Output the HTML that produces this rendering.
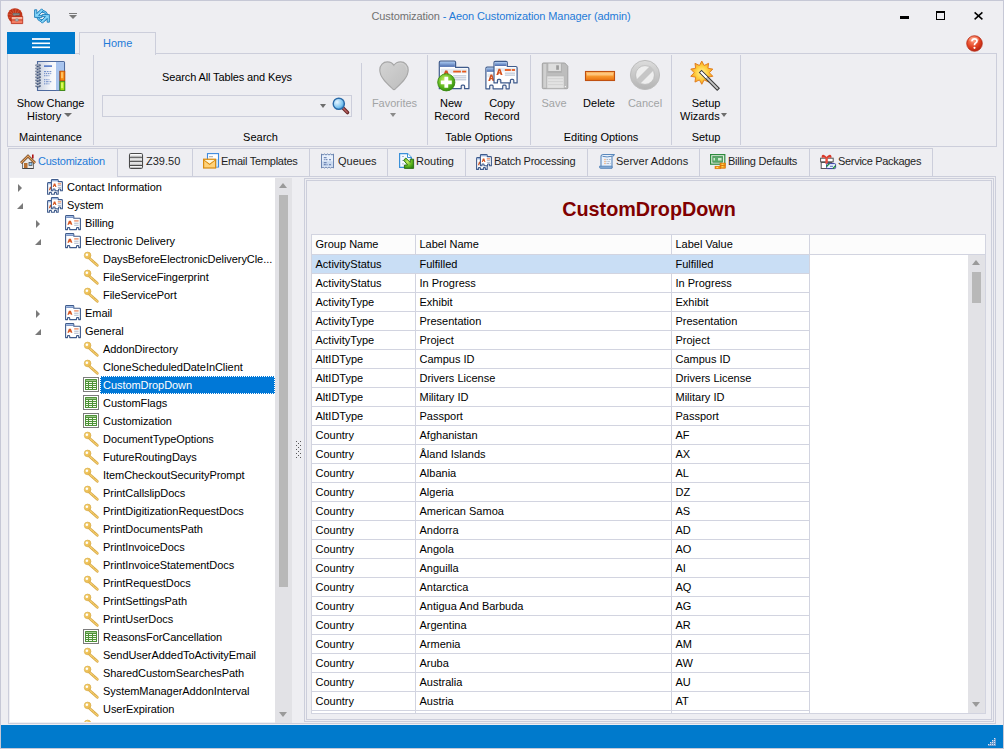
<!DOCTYPE html>
<html><head><meta charset="utf-8">
<style>
*{margin:0;padding:0;box-sizing:border-box}
html,body{width:1004px;height:749px;overflow:hidden}
body{background:#EEEEF2;font-family:"Liberation Sans",sans-serif;font-size:11px;color:#000;position:relative}
.a{position:absolute}
.t{position:absolute;white-space:nowrap;line-height:13px}
.bd{border:1px solid #CCCEDB}
.vl{position:absolute;width:1px;background:#CCCEDB}
.hl{position:absolute;height:1px;background:#CCCEDB}
.c{text-align:center}
svg{position:absolute;overflow:visible}
.tc{width:0;height:0;border-top:4px solid transparent;border-bottom:4px solid transparent;border-left:4px solid #7A7A7A}
.te{width:0;height:0;border-left:6px solid transparent;border-bottom:6px solid #7A7A7A}
.tsel{background:#0078D7;outline:1px dotted #fff;outline-offset:-1px}
.gl{background:#D2D4E0}
.ts{letter-spacing:-0.3px}
.tt{letter-spacing:-0.06px}
</style></head><body>
<!-- window border -->
<div class="a" style="left:0;top:0;width:1004px;height:749px;border:1px solid #C6C8D6"></div>

<!-- TITLE BAR -->
<div class="t" style="left:-1px;width:1004px;top:10px;letter-spacing:-0.1px;text-align:center;color:#717171;padding-left:0px">Customization<span style="color:#1E7BD8"> - Aeon Customization Manager (admin)</span></div>
<div id="winctl">
  <div class="a" style="left:900px;top:16px;width:9px;height:3px;background:#000"></div>
  <div class="a" style="left:936px;top:11px;width:9px;height:9px;border:1px solid #000;border-top-width:2px"></div>
  <svg style="left:974px;top:12px" width="9" height="8" viewBox="0 0 9 8"><path d="M0.6 0.4 L8.4 7.4 M8.4 0.4 L0.6 7.4" stroke="#000" stroke-width="1.5"/></svg>
</div>

<!-- RIBBON TABS -->
<div class="a" style="left:7px;top:32px;width:68px;height:22px;background:#007ACC;z-index:3"></div>
<svg style="left:32px;top:36px;z-index:4" width="18" height="14" viewBox="0 0 18 14"><rect x="0" y="2" width="18" height="2" fill="#E4EEF8"/><rect x="0" y="6.5" width="18" height="1.6" fill="#fff"/><rect x="0" y="10.5" width="18" height="1.6" fill="#fff"/></svg>
<div class="a" style="left:79px;top:32px;width:77px;height:23px;border:1px solid #CCCEDB;border-bottom:none;background:#EEEEF2;z-index:2"></div>
<div class="t" style="left:103px;top:37px;color:#1E7BD8;z-index:3">Home</div>

<!-- RIBBON PANEL -->
<div class="a" style="left:7px;top:53px;width:990px;height:94px;border:1px solid #CCCEDB"></div>
<div class="vl" style="left:93px;top:55px;height:90px"></div>
<div class="vl" style="left:361px;top:63px;height:57px"></div>
<div class="vl" style="left:427px;top:55px;height:90px"></div>
<div class="vl" style="left:530px;top:55px;height:90px"></div>
<div class="vl" style="left:671px;top:55px;height:90px"></div>
<div class="vl" style="left:740px;top:55px;height:90px"></div>

<!-- ribbon text -->
<div class="t c" style="left:8px;width:85px;top:97px;letter-spacing:-0.15px">Show Change</div>
<div class="t" style="left:27px;top:110px">History</div>
<div class="a" style="left:64px;top:113px;width:0;height:0;border-left:4px solid transparent;border-right:4px solid transparent;border-top:4px solid #6D6D6D"></div>
<div class="t c" style="left:8px;width:85px;top:131px">Maintenance</div>

<div class="t c" style="left:94px;width:266px;top:71px;letter-spacing:-0.12px">Search All Tables and Keys</div>
<div class="a" style="left:102px;top:95px;width:250px;height:22px;border:1px solid #CCCEDB;background:#EEEEF2"></div>
<div class="t c" style="left:94px;width:333px;top:131px">Search</div>

<div class="t c" style="left:362px;width:65px;top:97px;color:#A2A4A5">Favorites</div>
<div class="t c" style="left:428px;width:102px;top:131px">Table Options</div>
<div class="t c" style="left:428px;width:46px;top:97px">New</div>
<div class="t c" style="left:429px;width:46px;top:110px">Record</div>
<div class="t c" style="left:477px;width:50px;top:97px">Copy</div>
<div class="t c" style="left:477px;width:50px;top:110px">Record</div>

<div class="t c" style="left:531px;width:140px;top:131px">Editing Options</div>
<div class="t c" style="left:535px;width:38px;top:97px;color:#A2A4A5">Save</div>
<div class="t c" style="left:575px;width:48px;top:97px">Delete</div>
<div class="t c" style="left:624px;width:42px;top:97px;color:#A2A4A5">Cancel</div>

<div class="t c" style="left:672px;width:68px;top:131px">Setup</div>
<div class="t c" style="left:672px;width:68px;top:97px">Setup</div>
<div class="t" style="left:680px;top:110px">Wizards</div>

<!-- RIBBON ICONS -->
<svg style="left:34px;top:60px" width="32" height="32" viewBox="0 0 32 32">
 <defs><linearGradient id="gPage" x1="0" y1="0" x2="1" y2="0"><stop offset="0" stop-color="#C8D0E0"/><stop offset="0.5" stop-color="#F4F6FA"/><stop offset="1" stop-color="#fff"/></linearGradient></defs>
 <path d="M3.5,1.5 H29.5 Q30.5,1.5 30.5,2.5 V30.5 H3.5 Z" fill="url(#gPage)" stroke="#4E6A9E" stroke-width="1.1"/>
 <rect x="22" y="2.1" width="8" height="9" fill="#A8C4EE"/>
 <rect x="22" y="2.1" width="3.2" height="28" fill="#A8C4EE"/>
 <path d="M25.5,11 V30.3" stroke="#4E6A9E" stroke-width="0.9"/>
 <rect x="26" y="11.2" width="4.8" height="9.4" fill="#F88A10" stroke="#C85000" stroke-width="0.9"/>
 <rect x="27" y="12.2" width="2.2" height="6" fill="#FFC060"/>
 <rect x="26" y="21.6" width="4.8" height="8.8" fill="#A8E010" stroke="#3A8A10" stroke-width="0.9"/>
 <rect x="27" y="22.6" width="2.2" height="5.5" fill="#D8F860"/>
 <ellipse cx="4" cy="5.30" rx="2.9" ry="1.35" fill="#34466A"/>
 <path d="M1.8,5.00 H5.2" stroke="#fff" stroke-width="0.9" stroke-linecap="round"/>
 <ellipse cx="4" cy="8.27" rx="2.9" ry="1.35" fill="#34466A"/>
 <path d="M1.8,7.97 H5.2" stroke="#fff" stroke-width="0.9" stroke-linecap="round"/>
 <ellipse cx="4" cy="11.24" rx="2.9" ry="1.35" fill="#34466A"/>
 <path d="M1.8,10.94 H5.2" stroke="#fff" stroke-width="0.9" stroke-linecap="round"/>
 <ellipse cx="4" cy="14.21" rx="2.9" ry="1.35" fill="#34466A"/>
 <path d="M1.8,13.91 H5.2" stroke="#fff" stroke-width="0.9" stroke-linecap="round"/>
 <ellipse cx="4" cy="17.18" rx="2.9" ry="1.35" fill="#34466A"/>
 <path d="M1.8,16.88 H5.2" stroke="#fff" stroke-width="0.9" stroke-linecap="round"/>
 <ellipse cx="4" cy="20.15" rx="2.9" ry="1.35" fill="#34466A"/>
 <path d="M1.8,19.85 H5.2" stroke="#fff" stroke-width="0.9" stroke-linecap="round"/>
 <ellipse cx="4" cy="23.12" rx="2.9" ry="1.35" fill="#34466A"/>
 <path d="M1.8,22.82 H5.2" stroke="#fff" stroke-width="0.9" stroke-linecap="round"/>
 <ellipse cx="4" cy="26.09" rx="2.9" ry="1.35" fill="#34466A"/>
 <path d="M1.8,25.79 H5.2" stroke="#fff" stroke-width="0.9" stroke-linecap="round"/>
 <rect x="10" y="5.4" width="8" height="1.4" fill="#3E68C0"/>
 <g fill="#5A7CC0">
  <rect x="10" y="11.2" width="2.2" height="0.9"/><rect x="13" y="11.2" width="1.6" height="0.9"/><rect x="15.5" y="11.2" width="1.8" height="0.9"/>
  <rect x="10" y="13.2" width="0.9" height="0.9"/><rect x="11.8" y="13.2" width="1.4" height="0.9"/><rect x="14" y="13.2" width="1.4" height="0.9"/><rect x="16.3" y="13.2" width="0.9" height="0.9"/>
  <rect x="10" y="15.3" width="1.4" height="0.9"/><rect x="12.2" y="15.3" width="1.4" height="0.9"/><rect x="14.5" y="15.3" width="0.9" height="0.9"/>
  <rect x="10" y="19.3" width="1.4" height="0.9"/><rect x="12.2" y="19.3" width="1.4" height="0.9"/><rect x="14.5" y="19.3" width="0.9" height="0.9"/>
  <rect x="10" y="21.3" width="0.9" height="0.9"/><rect x="11.8" y="21.3" width="2.8" height="0.9"/><rect x="15.5" y="21.3" width="1.8" height="0.9"/>
  <rect x="10" y="23.4" width="1.4" height="0.9"/><rect x="12.2" y="23.4" width="1.4" height="0.9"/><rect x="14.5" y="23.4" width="0.9" height="0.9"/>
 </g>
</svg>
<!-- search dropdown + magnifier -->
<div class="a" style="left:320px;top:104px;width:0;height:0;border-left:3.5px solid transparent;border-right:3.5px solid transparent;border-top:4px solid #6D6D6D"></div>
<svg style="left:332px;top:97px" width="18" height="18" viewBox="0 0 18 18">
 <defs><radialGradient id="gLens" cx="0.35" cy="0.35" r="0.7"><stop offset="0" stop-color="#E8F6FF"/><stop offset="0.7" stop-color="#7CC4F0"/><stop offset="1" stop-color="#3A90D0"/></radialGradient></defs>
 <path d="M10,10 L15.5,15.5" stroke="#6A2A2A" stroke-width="3.6" stroke-linecap="round"/>
 <path d="M10.5,10.5 L15.2,15.2" stroke="#B86060" stroke-width="1.5" stroke-linecap="round"/>
 <circle cx="6.8" cy="6.8" r="5.6" fill="url(#gLens)" stroke="#2A6AA8" stroke-width="1.4"/>
</svg>
<!-- favorites heart -->
<svg style="left:378px;top:60px" width="32" height="32" viewBox="0 0 32 32">
 <path d="M16,29.6 Q15.4,29.6 14.6,28.8 C9,23.6 1.8,17.4 1.8,10 C1.8,5 5.2,1.9 9.4,1.9 C12.6,1.9 14.9,3.6 16,5.6 C17.1,3.6 19.4,1.9 22.6,1.9 C26.8,1.9 30.2,5 30.2,10 C30.2,17.4 23,23.6 17.4,28.8 Q16.6,29.6 16,29.6 Z" fill="url(#gHeart)" stroke="#A6A6A6" stroke-width="1.1"/>
 <path d="M16,6.5 C17,4.6 19,3.2 22,3.2 C25,3.2 28.6,5.4 28.8,10" fill="none" stroke="#D8D8D8" stroke-width="0.8" opacity="0.7"/>
</svg>
<div class="a" style="left:390px;top:113px;width:0;height:0;border-left:3.5px solid transparent;border-right:3.5px solid transparent;border-top:4px solid #8A8A8A"></div>
<!-- new record -->
<svg style="left:438px;top:60px" width="32" height="32" viewBox="0 0 32 32">
<path d="M1.3,28.700000000000003 V2.4000000000000004 Q1.3,1.1 2.6,1.1 H16.3 Q17.6,1.1 17.6,2.4000000000000004 V7.4 H29.6 Q30.900000000000002,7.4 30.900000000000002,8.700000000000001 V28.700000000000003 H26.599999999999998 V26.1 Q26.599999999999998,25.1 25.599999999999998,25.1 H24.2 Q23.2,25.1 23.2,26.1 V28.700000000000003 H9.7 V26.1 Q9.7,25.1 8.7,25.1 H7.3 Q6.3,25.1 6.3,26.1 V28.700000000000003 Z" fill="#fff" stroke="#3F5B8C" stroke-width="1.2" stroke-linejoin="round"/>
<rect x="2.0" y="1.8" width="14.9" height="5.1" fill="url(#gTab)"/>
<rect x="2.8" y="8.700000000000001" width="26.6" height="4.686" fill="#E6EAF0"/>
<path d="M4.260000000000001,18.476000000000003 L7.137120000000001,10.382000000000001 H9.374880000000001 L12.252000000000002,18.476000000000003 H9.854400000000002 L9.055200000000001,16.4525 H7.456800000000001 L6.6576,18.476000000000003 Z" fill="#D2501E"/>
<path d="M7.61664,14.833700000000002 H8.89536 L8.256,12.810200000000002 Z" fill="#fff"/>
<rect x="15.212" y="10.682000000000002" width="7.696000000000001" height="1.8" fill="#E85A1C"/>
<rect x="24.092" y="10.682000000000002" width="4.144000000000001" height="1.8" fill="#E85A1C"/>
<rect x="15.212" y="15.400280000000002" width="13.024000000000001" height="0.9" fill="#A8B4C8"/>
<rect x="15.212" y="17.400280000000002" width="13.024000000000001" height="0.9" fill="#A8B4C8"/>
<rect x="15.212" y="19.400280000000002" width="13.024000000000001" height="0.9" fill="#A8B4C8"/>
 <circle cx="8.3" cy="22.3" r="8.6" fill="url(#gGreen)" stroke="#3A8A10" stroke-width="0.9"/>
 <path d="M8.3,16.8 V27.8 M2.8,22.3 H13.8" stroke="#fff" stroke-width="3.8"/>
</svg>
<!-- copy record -->
<svg style="left:485px;top:60px" width="32" height="32" viewBox="0 0 32 32">
<path d="M0.9,28.8 V8.4 Q0.9,7.1 2.2,7.1 H8.6 Q9.9,7.1 9.9,8.4 V12.3 H22.9 Q24.2,12.3 24.2,13.600000000000001 V28.8 H21.099999999999998 V26.2 Q21.099999999999998,25.2 20.099999999999998,25.2 H18.7 Q17.7,25.2 17.7,26.2 V28.8 H8.1 V26.2 Q8.1,25.2 7.1,25.2 H5.7 Q4.7,25.2 4.7,26.2 V28.8 Z" fill="#fff" stroke="#3F5B8C" stroke-width="1.2" stroke-linejoin="round"/>
<rect x="1.6" y="7.8" width="7.6" height="4.0" fill="url(#gTab)"/>
<rect x="2.4" y="13.600000000000001" width="20.3" height="3.63" fill="#E6EAF0"/>
<path d="M3.23,20.880000000000003 L5.494759999999999,14.610000000000001 H7.25624 L9.521,20.880000000000003 H7.633699999999999 L7.0046,19.3125 H5.7464 L5.1173,20.880000000000003 Z" fill="#D2501E"/>
<path d="M5.87222,18.058500000000002 H6.87878 L6.375500000000001,16.491 Z" fill="#fff"/>
<rect x="11.851" y="14.910000000000002" width="6.058000000000001" height="1.8" fill="#E85A1C"/>
<rect x="18.841" y="14.910000000000002" width="3.2620000000000005" height="1.8" fill="#E85A1C"/>
<rect x="11.851" y="18.497400000000003" width="10.252" height="0.9" fill="#A8B4C8"/>
<rect x="11.851" y="20.497400000000003" width="10.252" height="0.9" fill="#A8B4C8"/>
<path d="M9,22.9 V2.7 Q9,1.4 10.3,1.4 H21.0 Q22.3,1.4 22.3,2.7 V6.5 H30.8 Q32.1,6.5 32.1,7.8 V22.9 H28.799999999999997 V20.299999999999997 Q28.799999999999997,19.299999999999997 27.799999999999997,19.299999999999997 H26.4 Q25.4,19.299999999999997 25.4,20.299999999999997 V22.9 H15.8 V20.299999999999997 Q15.8,19.299999999999997 14.8,19.299999999999997 H13.4 Q12.4,19.299999999999997 12.4,20.299999999999997 V22.9 Z" fill="#fff" stroke="#3F5B8C" stroke-width="1.2" stroke-linejoin="round"/>
<rect x="9.7" y="2.0999999999999996" width="11.9" height="3.8999999999999995" fill="url(#gTab)"/>
<rect x="10.5" y="7.8" width="20.1" height="3.6079999999999997" fill="#E6EAF0"/>
<path d="M11.31,15.027999999999999 L13.555320000000002,8.796 H15.301680000000001 L17.547,15.027999999999999 H15.675900000000002 L15.052200000000001,13.469999999999999 H13.8048 L13.1811,15.027999999999999 Z" fill="#D2501E"/>
<path d="M13.929540000000001,12.2236 H14.92746 L14.428500000000001,10.6656 Z" fill="#fff"/>
<rect x="19.857" y="9.096" width="6.006" height="1.8" fill="#E85A1C"/>
<rect x="26.787" y="9.096" width="3.2340000000000004" height="1.8" fill="#E85A1C"/>
<rect x="19.857" y="12.659839999999999" width="10.164000000000001" height="0.9" fill="#A8B4C8"/>
<rect x="19.857" y="14.659839999999999" width="10.164000000000001" height="0.9" fill="#A8B4C8"/>
</svg>
<!-- save -->
<svg style="left:541px;top:60px" width="32" height="32" viewBox="0 0 32 32">
 <path d="M2.3,3 H23.8 L26.8,6.2 V27.7 Q26.8,28.7 25.8,28.7 H2.3 Q1.3,28.7 1.3,27.7 V4 Q1.3,3 2.3,3 Z" fill="#BDBDBD" stroke="#A2A2A2" stroke-width="1"/>
 <rect x="2.4" y="4" width="2.6" height="23.6" fill="#D0D0D0"/>
 <rect x="6.3" y="3.4" width="14.6" height="9.4" fill="#B0B0B0"/>
 <rect x="7.3" y="3.6" width="12.6" height="7.4" fill="#DEDEDE"/>
 <rect x="15.2" y="5.3" width="2.7" height="4.5" fill="#9C9C9C"/>
 <rect x="5.9" y="16" width="17.2" height="12.2" fill="#E2E2E2" stroke="#B4B4B4" stroke-width="0.6"/>
 <g fill="#CACACA"><rect x="7" y="18.4" width="15" height="0.7"/><rect x="7" y="21.4" width="15" height="0.7"/><rect x="7" y="24.4" width="15" height="0.7"/></g>
 <rect x="23.8" y="26" width="1.2" height="1.2" fill="#F4F4F4"/>
</svg>
<!-- delete -->
<svg style="left:584px;top:60px" width="32" height="32" viewBox="0 0 32 32">
 <rect x="1.5" y="11.5" width="29" height="9" fill="url(#gOr)" stroke="#C05010" stroke-width="1.1"/>
 <rect x="3" y="13" width="26" height="2.5" fill="#FFD090" opacity="0.7"/>
</svg>
<!-- cancel -->
<svg style="left:629px;top:59px" width="32" height="32" viewBox="0 0 32 32">
 <defs><linearGradient id="gCan" x1="0" y1="0" x2="0" y2="1"><stop offset="0" stop-color="#DCDCDC"/><stop offset="1" stop-color="#B4B4B4"/></linearGradient></defs>
 <circle cx="16" cy="16" r="14.6" fill="url(#gCan)" stroke="#BDBDBD" stroke-width="1"/>
 <circle cx="16" cy="16" r="9.4" fill="#EEEEEE" stroke="#B4B4B4" stroke-width="0.7"/>
 <path d="M9,23 L23,9" stroke="#C6C6C6" stroke-width="5.6"/>
</svg>
<!-- setup wizard -->
<svg style="left:688px;top:59px" width="32" height="32" viewBox="0 0 32 32">
 <defs><radialGradient id="gStar" cx="0.5" cy="0.5" r="0.5"><stop offset="0" stop-color="#FFF4A0"/><stop offset="0.55" stop-color="#FFD040"/><stop offset="1" stop-color="#F4A020"/></radialGradient></defs>
 <path d="M13.80,2.10 L16.15,6.47 L20.62,4.32 L19.95,9.23 L24.83,10.12 L21.40,13.70 L24.83,17.28 L19.95,18.17 L20.62,23.08 L16.15,20.93 L13.80,25.30 L11.45,20.93 L6.98,23.08 L7.65,18.17 L2.77,17.28 L6.20,13.70 L2.77,10.12 L7.65,9.23 L6.98,4.32 L11.45,6.47 Z" fill="url(#gStar)" stroke="#E07818" stroke-width="0.9" stroke-linejoin="round"/>
 <path d="M13.6,13.6 L29.2,29.2" stroke="#3C3C3C" stroke-width="4" stroke-linecap="square"/>
 <path d="M13.6,13.6 L29.2,29.2" stroke="#C8C8C8" stroke-width="1.8" stroke-linecap="square"/>
 <path d="M13.6,13.6 L17.8,17.8" stroke="#FFFFFF" stroke-width="2" stroke-linecap="square"/>
</svg>
<div class="a" style="left:721px;top:113px;width:0;height:0;border-left:3.5px solid transparent;border-right:3.5px solid transparent;border-top:4px solid #6D6D6D"></div>
<!-- title bar icons -->
<svg style="left:7px;top:8px" width="16" height="16" viewBox="0 0 16 16"><use href="#i-app"/></svg>
<svg style="left:34px;top:8px" width="16" height="16" viewBox="0 0 16 16"><use href="#i-sync"/></svg>
<div class="a" style="left:69px;top:13px;width:8px;height:1px;background:#7A7A7A"></div>
<div class="a" style="left:69px;top:15px;width:0;height:0;border-left:4px solid transparent;border-right:4px solid transparent;border-top:4px solid #7A7A7A"></div>
<!-- help -->
<svg style="left:966px;top:35px" width="17" height="17" viewBox="0 0 17 17">
 <circle cx="8.5" cy="8.5" r="7.8" fill="url(#gRed)" stroke="#B82A14" stroke-width="0.8"/>
 <ellipse cx="8" cy="4.5" rx="5" ry="3" fill="#FFB8A0" opacity="0.45"/>
 <path d="M6,6.3 Q6,3.8 8.5,3.8 Q11,3.8 11,6 Q11,7.5 9.3,8.3 Q8.5,8.8 8.5,10.3" fill="none" stroke="#fff" stroke-width="1.7"/>
 <circle cx="8.5" cy="12.8" r="1.1" fill="#fff"/>
</svg>
<!--/RIBBON ICONS-->

<!-- DOCUMENT TABS -->
<!--TABS-->
<div class="a" style="left:8px;top:148px;width:110px;height:29px;border:1px solid #CCCEDB;border-bottom:none;background:#EEEEF2;z-index:2"></div>
<svg class="ic" style="left:20px;top:153px;z-index:3" width="16" height="16"><use href="#i-home"/></svg>
<div class="t" style="left:38px;top:155px;color:#1E7BD8;z-index:3;letter-spacing:-0.22px">Customization</div>
<div class="a" style="left:117px;top:148px;width:76px;height:29px;border:1px solid #CCCEDB;background:#EEEEF2"></div>
<svg class="ic" style="left:128px;top:153px;z-index:3" width="16" height="16"><use href="#i-db"/></svg>
<div class="t" style="left:146px;top:155px;color:#1E1E1E;z-index:3;letter-spacing:0px">Z39.50</div>
<div class="a" style="left:192px;top:148px;width:118px;height:29px;border:1px solid #CCCEDB;background:#EEEEF2"></div>
<svg class="ic" style="left:203px;top:153px;z-index:3" width="16" height="16"><use href="#i-mail"/></svg>
<div class="t" style="left:221px;top:155px;color:#1E1E1E;z-index:3;letter-spacing:-0.26px">Email Templates</div>
<div class="a" style="left:309px;top:148px;width:79px;height:29px;border:1px solid #CCCEDB;background:#EEEEF2"></div>
<svg class="ic" style="left:320px;top:153px;z-index:3" width="16" height="16"><use href="#i-queue"/></svg>
<div class="t" style="left:338px;top:155px;color:#1E1E1E;z-index:3;letter-spacing:0px">Queues</div>
<div class="a" style="left:387px;top:148px;width:79px;height:29px;border:1px solid #CCCEDB;background:#EEEEF2"></div>
<svg class="ic" style="left:399px;top:153px;z-index:3" width="16" height="16"><use href="#i-route"/></svg>
<div class="t" style="left:416px;top:155px;color:#1E1E1E;z-index:3;letter-spacing:0px">Routing</div>
<div class="a" style="left:465px;top:148px;width:123px;height:29px;border:1px solid #CCCEDB;background:#EEEEF2"></div>
<svg class="ic" style="left:476px;top:153px;z-index:3" width="16" height="16"><use href="#i-batch"/></svg>
<div class="t" style="left:494px;top:155px;color:#1E1E1E;z-index:3;letter-spacing:-0.27px">Batch Processing</div>
<div class="a" style="left:587px;top:148px;width:113px;height:29px;border:1px solid #CCCEDB;background:#EEEEF2"></div>
<svg class="ic" style="left:599px;top:153px;z-index:3" width="16" height="16"><use href="#i-scroll"/></svg>
<div class="t" style="left:616px;top:155px;color:#1E1E1E;z-index:3;letter-spacing:0px">Server Addons</div>
<div class="a" style="left:699px;top:148px;width:111px;height:29px;border:1px solid #CCCEDB;background:#EEEEF2"></div>
<svg class="ic" style="left:710px;top:153px;z-index:3" width="16" height="16"><use href="#i-bill"/></svg>
<div class="t" style="left:728px;top:155px;color:#1E1E1E;z-index:3;letter-spacing:-0.23px">Billing Defaults</div>
<div class="a" style="left:809px;top:148px;width:124px;height:29px;border:1px solid #CCCEDB;background:#EEEEF2"></div>
<svg class="ic" style="left:820px;top:153px;z-index:3" width="16" height="16"><use href="#i-gift"/></svg>
<div class="t" style="left:838px;top:155px;color:#1E1E1E;z-index:3;letter-spacing:-0.31px">Service Packages</div>
<!--/TABS-->

<!-- CONTENT -->
<div class="a" style="left:8px;top:176px;width:988px;height:548px;border:1px solid #CCCEDB"></div>
<div class="a" style="left:9px;top:177px;width:266px;height:546px;background:#F0F0F4"></div>
<div class="a" style="left:10px;top:178px;width:265px;height:544px;background:#fff"></div>
<div class="a" style="left:275px;top:178px;width:17px;height:545px;background:#E2E2E6"></div>

<div class="a" style="left:304px;top:178px;width:690px;height:544px;border:1px solid #CCCEDB"></div>
<div class="a" style="left:306px;top:180px;width:686px;height:540px;border:1px solid #CCCEDB"></div>
<!-- tree -->
<div class="a" style="left:10px;top:178px;width:265px;height:544px;overflow:hidden">
<div class="a" style="left:-10px;top:-178px;width:300px;height:800px">
<!--TREE-->
<div class="a tc" style="left:18px;top:184px"></div>
<svg class="ic" style="left:47px;top:179px" width="16" height="16"><use href="#i-multi"/></svg>
<div class="t tt" style="left:67px;top:181px">Contact Information</div>
<div class="a te" style="left:17px;top:203px"></div>
<svg class="ic" style="left:47px;top:197px" width="16" height="16"><use href="#i-multi"/></svg>
<div class="t tt" style="left:67px;top:199px">System</div>
<div class="a tc" style="left:36px;top:220px"></div>
<svg class="ic" style="left:65px;top:215px" width="16" height="16"><use href="#i-form"/></svg>
<div class="t tt" style="left:85px;top:217px">Billing</div>
<div class="a te" style="left:35px;top:239px"></div>
<svg class="ic" style="left:65px;top:233px" width="16" height="16"><use href="#i-form"/></svg>
<div class="t tt" style="left:85px;top:235px">Electronic Delivery</div>
<svg class="ic" style="left:83px;top:251px" width="16" height="16"><use href="#i-key"/></svg>
<div class="t tt" style="left:103px;top:253px">DaysBeforeElectronicDeliveryCle...</div>
<svg class="ic" style="left:83px;top:269px" width="16" height="16"><use href="#i-key"/></svg>
<div class="t tt" style="left:103px;top:271px">FileServiceFingerprint</div>
<svg class="ic" style="left:83px;top:287px" width="16" height="16"><use href="#i-key"/></svg>
<div class="t tt" style="left:103px;top:289px">FileServicePort</div>
<div class="a tc" style="left:36px;top:310px"></div>
<svg class="ic" style="left:65px;top:305px" width="16" height="16"><use href="#i-form"/></svg>
<div class="t tt" style="left:85px;top:307px">Email</div>
<div class="a te" style="left:35px;top:329px"></div>
<svg class="ic" style="left:65px;top:323px" width="16" height="16"><use href="#i-form"/></svg>
<div class="t tt" style="left:85px;top:325px">General</div>
<svg class="ic" style="left:83px;top:341px" width="16" height="16"><use href="#i-key"/></svg>
<div class="t tt" style="left:103px;top:343px">AddonDirectory</div>
<svg class="ic" style="left:83px;top:359px" width="16" height="16"><use href="#i-key"/></svg>
<div class="t tt" style="left:103px;top:361px">CloneScheduledDateInClient</div>
<svg class="ic" style="left:83px;top:377px" width="16" height="16"><use href="#i-table"/></svg>
<div class="a tsel" style="left:100px;top:376px;width:175px;height:18px"></div>
<div class="t tt" style="left:103px;top:379px;color:#fff">CustomDropDown</div>
<svg class="ic" style="left:83px;top:395px" width="16" height="16"><use href="#i-table"/></svg>
<div class="t tt" style="left:103px;top:397px">CustomFlags</div>
<svg class="ic" style="left:83px;top:413px" width="16" height="16"><use href="#i-table"/></svg>
<div class="t tt" style="left:103px;top:415px">Customization</div>
<svg class="ic" style="left:83px;top:431px" width="16" height="16"><use href="#i-key"/></svg>
<div class="t tt" style="left:103px;top:433px">DocumentTypeOptions</div>
<svg class="ic" style="left:83px;top:449px" width="16" height="16"><use href="#i-key"/></svg>
<div class="t tt" style="left:103px;top:451px">FutureRoutingDays</div>
<svg class="ic" style="left:83px;top:467px" width="16" height="16"><use href="#i-key"/></svg>
<div class="t tt" style="left:103px;top:469px">ItemCheckoutSecurityPrompt</div>
<svg class="ic" style="left:83px;top:485px" width="16" height="16"><use href="#i-key"/></svg>
<div class="t tt" style="left:103px;top:487px">PrintCallslipDocs</div>
<svg class="ic" style="left:83px;top:503px" width="16" height="16"><use href="#i-key"/></svg>
<div class="t tt" style="left:103px;top:505px">PrintDigitizationRequestDocs</div>
<svg class="ic" style="left:83px;top:521px" width="16" height="16"><use href="#i-key"/></svg>
<div class="t tt" style="left:103px;top:523px">PrintDocumentsPath</div>
<svg class="ic" style="left:83px;top:539px" width="16" height="16"><use href="#i-key"/></svg>
<div class="t tt" style="left:103px;top:541px">PrintInvoiceDocs</div>
<svg class="ic" style="left:83px;top:557px" width="16" height="16"><use href="#i-key"/></svg>
<div class="t tt" style="left:103px;top:559px">PrintInvoiceStatementDocs</div>
<svg class="ic" style="left:83px;top:575px" width="16" height="16"><use href="#i-key"/></svg>
<div class="t tt" style="left:103px;top:577px">PrintRequestDocs</div>
<svg class="ic" style="left:83px;top:593px" width="16" height="16"><use href="#i-key"/></svg>
<div class="t tt" style="left:103px;top:595px">PrintSettingsPath</div>
<svg class="ic" style="left:83px;top:611px" width="16" height="16"><use href="#i-key"/></svg>
<div class="t tt" style="left:103px;top:613px">PrintUserDocs</div>
<svg class="ic" style="left:83px;top:629px" width="16" height="16"><use href="#i-table"/></svg>
<div class="t tt" style="left:103px;top:631px">ReasonsForCancellation</div>
<svg class="ic" style="left:83px;top:647px" width="16" height="16"><use href="#i-key"/></svg>
<div class="t tt" style="left:103px;top:649px">SendUserAddedToActivityEmail</div>
<svg class="ic" style="left:83px;top:665px" width="16" height="16"><use href="#i-key"/></svg>
<div class="t tt" style="left:103px;top:667px">SharedCustomSearchesPath</div>
<svg class="ic" style="left:83px;top:683px" width="16" height="16"><use href="#i-key"/></svg>
<div class="t tt" style="left:103px;top:685px">SystemManagerAddonInterval</div>
<svg class="ic" style="left:83px;top:701px" width="16" height="16"><use href="#i-key"/></svg>
<div class="t tt" style="left:103px;top:703px">UserExpiration</div>
<svg class="ic" style="left:83px;top:719px" width="16" height="16"><use href="#i-key"/></svg>
<!--/TREE-->
</div></div>
<!-- tree scrollbar -->
<div class="a" style="left:279px;top:183px;width:0;height:0;border-left:4.5px solid transparent;border-right:4.5px solid transparent;border-bottom:5px solid #9A9A9A"></div>
<div class="a" style="left:279px;top:195px;width:9px;height:392px;background:#B8B8B8"></div>
<div class="a" style="left:279px;top:712px;width:0;height:0;border-left:4.5px solid transparent;border-right:4.5px solid transparent;border-top:5px solid #9A9A9A"></div>
<!-- splitter grip -->
<div class="a" style="left:296px;top:441px;width:1px;height:1px;background:#5A5A5A"></div>
<div class="a" style="left:300px;top:441px;width:1px;height:1px;background:#5A5A5A"></div>
<div class="a" style="left:296px;top:445px;width:1px;height:1px;background:#5A5A5A"></div>
<div class="a" style="left:300px;top:445px;width:1px;height:1px;background:#5A5A5A"></div>
<div class="a" style="left:296px;top:449px;width:1px;height:1px;background:#5A5A5A"></div>
<div class="a" style="left:300px;top:449px;width:1px;height:1px;background:#5A5A5A"></div>
<div class="a" style="left:296px;top:453px;width:1px;height:1px;background:#5A5A5A"></div>
<div class="a" style="left:300px;top:453px;width:1px;height:1px;background:#5A5A5A"></div>
<div class="a" style="left:296px;top:457px;width:1px;height:1px;background:#5A5A5A"></div>
<div class="a" style="left:300px;top:457px;width:1px;height:1px;background:#5A5A5A"></div>
<div class="a" style="left:298px;top:443px;width:1px;height:1px;background:#5A5A5A"></div>
<div class="a" style="left:298px;top:447px;width:1px;height:1px;background:#5A5A5A"></div>
<div class="a" style="left:298px;top:451px;width:1px;height:1px;background:#5A5A5A"></div>
<div class="a" style="left:298px;top:455px;width:1px;height:1px;background:#5A5A5A"></div>

<!-- grid -->
<div class="t" style="left:306px;width:686px;top:197px;text-align:center;font-weight:bold;font-size:19.8px;line-height:24px;color:#800000">CustomDropDown</div>
<div class="a" style="left:311px;top:234px;width:675px;height:480px;border:1px solid #D2D4E0;background:#fff;overflow:hidden">
<div class="a" style="left:-312px;top:-235px;width:1004px;height:749px">
<div class="a" style="left:312px;top:235px;width:674px;height:19px;background:#FCFCFC"></div>
<div class="hl gl" style="left:311px;top:254px;width:675px"></div>
<div class="vl gl" style="left:415px;top:234px;height:480px"></div>
<div class="vl gl" style="left:671px;top:234px;height:480px"></div>
<div class="vl gl" style="left:809px;top:234px;height:480px"></div>
<div class="t" style="left:315.5px;top:238px">Group Name</div>
<div class="t" style="left:419.5px;top:238px">Label Name</div>
<div class="t" style="left:675.5px;top:238px">Label Value</div>
<!--GRID-->
<div class="a" style="left:312px;top:255px;width:497px;height:18px;background:#C9DEF5"></div>
<div class="hl gl" style="left:311px;top:273px;width:498px"></div>
<div class="t" style="left:315.5px;top:258px">ActivityStatus</div>
<div class="t" style="left:419.5px;top:258px">Fulfilled</div>
<div class="t" style="left:675.5px;top:258px">Fulfilled</div>
<div class="hl gl" style="left:311px;top:292px;width:498px"></div>
<div class="t" style="left:315.5px;top:277px">ActivityStatus</div>
<div class="t" style="left:419.5px;top:277px">In Progress</div>
<div class="t" style="left:675.5px;top:277px">In Progress</div>
<div class="hl gl" style="left:311px;top:311px;width:498px"></div>
<div class="t" style="left:315.5px;top:296px">ActivityType</div>
<div class="t" style="left:419.5px;top:296px">Exhibit</div>
<div class="t" style="left:675.5px;top:296px">Exhibit</div>
<div class="hl gl" style="left:311px;top:330px;width:498px"></div>
<div class="t" style="left:315.5px;top:315px">ActivityType</div>
<div class="t" style="left:419.5px;top:315px">Presentation</div>
<div class="t" style="left:675.5px;top:315px">Presentation</div>
<div class="hl gl" style="left:311px;top:349px;width:498px"></div>
<div class="t" style="left:315.5px;top:334px">ActivityType</div>
<div class="t" style="left:419.5px;top:334px">Project</div>
<div class="t" style="left:675.5px;top:334px">Project</div>
<div class="hl gl" style="left:311px;top:368px;width:498px"></div>
<div class="t" style="left:315.5px;top:353px">AltIDType</div>
<div class="t" style="left:419.5px;top:353px">Campus ID</div>
<div class="t" style="left:675.5px;top:353px">Campus ID</div>
<div class="hl gl" style="left:311px;top:387px;width:498px"></div>
<div class="t" style="left:315.5px;top:372px">AltIDType</div>
<div class="t" style="left:419.5px;top:372px">Drivers License</div>
<div class="t" style="left:675.5px;top:372px">Drivers License</div>
<div class="hl gl" style="left:311px;top:406px;width:498px"></div>
<div class="t" style="left:315.5px;top:391px">AltIDType</div>
<div class="t" style="left:419.5px;top:391px">Military ID</div>
<div class="t" style="left:675.5px;top:391px">Military ID</div>
<div class="hl gl" style="left:311px;top:425px;width:498px"></div>
<div class="t" style="left:315.5px;top:410px">AltIDType</div>
<div class="t" style="left:419.5px;top:410px">Passport</div>
<div class="t" style="left:675.5px;top:410px">Passport</div>
<div class="hl gl" style="left:311px;top:444px;width:498px"></div>
<div class="t" style="left:315.5px;top:429px">Country</div>
<div class="t" style="left:419.5px;top:429px">Afghanistan</div>
<div class="t" style="left:675.5px;top:429px">AF</div>
<div class="hl gl" style="left:311px;top:463px;width:498px"></div>
<div class="t" style="left:315.5px;top:448px">Country</div>
<div class="t" style="left:419.5px;top:448px">Åland Islands</div>
<div class="t" style="left:675.5px;top:448px">AX</div>
<div class="hl gl" style="left:311px;top:482px;width:498px"></div>
<div class="t" style="left:315.5px;top:467px">Country</div>
<div class="t" style="left:419.5px;top:467px">Albania</div>
<div class="t" style="left:675.5px;top:467px">AL</div>
<div class="hl gl" style="left:311px;top:501px;width:498px"></div>
<div class="t" style="left:315.5px;top:486px">Country</div>
<div class="t" style="left:419.5px;top:486px">Algeria</div>
<div class="t" style="left:675.5px;top:486px">DZ</div>
<div class="hl gl" style="left:311px;top:520px;width:498px"></div>
<div class="t" style="left:315.5px;top:505px">Country</div>
<div class="t" style="left:419.5px;top:505px">American Samoa</div>
<div class="t" style="left:675.5px;top:505px">AS</div>
<div class="hl gl" style="left:311px;top:539px;width:498px"></div>
<div class="t" style="left:315.5px;top:524px">Country</div>
<div class="t" style="left:419.5px;top:524px">Andorra</div>
<div class="t" style="left:675.5px;top:524px">AD</div>
<div class="hl gl" style="left:311px;top:558px;width:498px"></div>
<div class="t" style="left:315.5px;top:543px">Country</div>
<div class="t" style="left:419.5px;top:543px">Angola</div>
<div class="t" style="left:675.5px;top:543px">AO</div>
<div class="hl gl" style="left:311px;top:577px;width:498px"></div>
<div class="t" style="left:315.5px;top:562px">Country</div>
<div class="t" style="left:419.5px;top:562px">Anguilla</div>
<div class="t" style="left:675.5px;top:562px">AI</div>
<div class="hl gl" style="left:311px;top:596px;width:498px"></div>
<div class="t" style="left:315.5px;top:581px">Country</div>
<div class="t" style="left:419.5px;top:581px">Antarctica</div>
<div class="t" style="left:675.5px;top:581px">AQ</div>
<div class="hl gl" style="left:311px;top:615px;width:498px"></div>
<div class="t" style="left:315.5px;top:600px">Country</div>
<div class="t" style="left:419.5px;top:600px">Antigua And Barbuda</div>
<div class="t" style="left:675.5px;top:600px">AG</div>
<div class="hl gl" style="left:311px;top:634px;width:498px"></div>
<div class="t" style="left:315.5px;top:619px">Country</div>
<div class="t" style="left:419.5px;top:619px">Argentina</div>
<div class="t" style="left:675.5px;top:619px">AR</div>
<div class="hl gl" style="left:311px;top:653px;width:498px"></div>
<div class="t" style="left:315.5px;top:638px">Country</div>
<div class="t" style="left:419.5px;top:638px">Armenia</div>
<div class="t" style="left:675.5px;top:638px">AM</div>
<div class="hl gl" style="left:311px;top:672px;width:498px"></div>
<div class="t" style="left:315.5px;top:657px">Country</div>
<div class="t" style="left:419.5px;top:657px">Aruba</div>
<div class="t" style="left:675.5px;top:657px">AW</div>
<div class="hl gl" style="left:311px;top:691px;width:498px"></div>
<div class="t" style="left:315.5px;top:676px">Country</div>
<div class="t" style="left:419.5px;top:676px">Australia</div>
<div class="t" style="left:675.5px;top:676px">AU</div>
<div class="hl gl" style="left:311px;top:710px;width:498px"></div>
<div class="t" style="left:315.5px;top:695px">Country</div>
<div class="t" style="left:419.5px;top:695px">Austria</div>
<div class="t" style="left:675.5px;top:695px">AT</div>
<!--/GRID-->
<div class="a" style="left:968px;top:255px;width:17px;height:458px;background:#E2E2E6"></div>
<div class="a" style="left:972px;top:260px;width:0;height:0;border-left:4.5px solid transparent;border-right:4.5px solid transparent;border-bottom:5px solid #9A9A9A"></div>
<div class="a" style="left:972px;top:272px;width:9px;height:31px;background:#B8B8B8"></div>
<div class="a" style="left:972px;top:702px;width:0;height:0;border-left:4.5px solid transparent;border-right:4.5px solid transparent;border-top:5px solid #9A9A9A"></div>
</div></div>

<!-- STATUS BAR -->
<div class="a" style="left:1px;top:725px;width:1002px;height:23px;background:#007ACC"></div>
<div class="a" style="left:994px;top:738px;width:2px;height:2px;background:#6A9ACC"></div><div class="a" style="left:994px;top:738px;width:1px;height:1px;background:#D8E8F8"></div>
<div class="a" style="left:992px;top:740px;width:2px;height:2px;background:#6A9ACC"></div><div class="a" style="left:992px;top:740px;width:1px;height:1px;background:#D8E8F8"></div>
<div class="a" style="left:994px;top:740px;width:2px;height:2px;background:#6A9ACC"></div><div class="a" style="left:994px;top:740px;width:1px;height:1px;background:#D8E8F8"></div>
<div class="a" style="left:990px;top:742px;width:2px;height:2px;background:#6A9ACC"></div><div class="a" style="left:990px;top:742px;width:1px;height:1px;background:#D8E8F8"></div>
<div class="a" style="left:992px;top:742px;width:2px;height:2px;background:#6A9ACC"></div><div class="a" style="left:992px;top:742px;width:1px;height:1px;background:#D8E8F8"></div>
<div class="a" style="left:994px;top:742px;width:2px;height:2px;background:#6A9ACC"></div><div class="a" style="left:994px;top:742px;width:1px;height:1px;background:#D8E8F8"></div>
<div class="a" style="left:988px;top:744px;width:2px;height:2px;background:#6A9ACC"></div><div class="a" style="left:988px;top:744px;width:1px;height:1px;background:#D8E8F8"></div>
<div class="a" style="left:990px;top:744px;width:2px;height:2px;background:#6A9ACC"></div><div class="a" style="left:990px;top:744px;width:1px;height:1px;background:#D8E8F8"></div>
<div class="a" style="left:992px;top:744px;width:2px;height:2px;background:#6A9ACC"></div><div class="a" style="left:992px;top:744px;width:1px;height:1px;background:#D8E8F8"></div>
<div class="a" style="left:994px;top:744px;width:2px;height:2px;background:#6A9ACC"></div><div class="a" style="left:994px;top:744px;width:1px;height:1px;background:#D8E8F8"></div>
<svg width="0" height="0" style="position:absolute">
<defs>
<linearGradient id="gKey" x1="0" y1="0" x2="1" y2="1"><stop offset="0" stop-color="#F8D878"/><stop offset="1" stop-color="#E8B448"/></linearGradient>
<linearGradient id="gTab" x1="0" y1="0" x2="0" y2="1"><stop offset="0" stop-color="#A8C8F0"/><stop offset="1" stop-color="#4A6AAC"/></linearGradient>
<linearGradient id="gHeart" x1="0" y1="0" x2="1" y2="1"><stop offset="0" stop-color="#D4D4D4"/><stop offset="1" stop-color="#BCBCBC"/></linearGradient>
<linearGradient id="gOr" x1="0" y1="0" x2="0" y2="1"><stop offset="0" stop-color="#FFC070"/><stop offset="0.5" stop-color="#F89A30"/><stop offset="1" stop-color="#E87010"/></linearGradient>
<linearGradient id="gGray" x1="0" y1="0" x2="0" y2="1"><stop offset="0" stop-color="#DADADA"/><stop offset="1" stop-color="#B0B0B0"/></linearGradient>
<radialGradient id="gGreen" cx="0.4" cy="0.35" r="0.7"><stop offset="0" stop-color="#C8F060"/><stop offset="0.6" stop-color="#60B820"/><stop offset="1" stop-color="#2E8A10"/></radialGradient>
<radialGradient id="gRed" cx="0.4" cy="0.3" r="0.75"><stop offset="0" stop-color="#FF9070"/><stop offset="0.6" stop-color="#E04020"/><stop offset="1" stop-color="#B02010"/></radialGradient>
<linearGradient id="gDb" x1="0" y1="0" x2="0" y2="1"><stop offset="0" stop-color="#FFFFFF"/><stop offset="0.5" stop-color="#E6E6E6"/><stop offset="1" stop-color="#9A9A9A"/></linearGradient>

<!-- form card 16x16 -->
<g id="i-form">
 <path d="M0.6,14.600000000000001 V1.4 Q0.6,0.6 1.4,0.6 H7.999999999999999 Q8.799999999999999,0.6 8.799999999999999,1.4 V3.2 H14.6 Q15.4,3.2 15.4,4.0 V14.600000000000001 H13.7 V13.200000000000001 Q13.7,12.600000000000001 13.1,12.600000000000001 H12.1 Q11.5,12.600000000000001 11.5,13.200000000000001 V14.600000000000001 H4.7 V13.200000000000001 Q4.7,12.600000000000001 4.1000000000000005,12.600000000000001 H3.1 Q2.5,12.600000000000001 2.5,13.200000000000001 V14.600000000000001 Z" fill="#fff" stroke="#3F5B8C" stroke-width="1.1" stroke-linejoin="round"/>
 <rect x="1.2" y="1.2" width="6.999999999999999" height="1.6" fill="url(#gTab)"/>
 <path d="M2.38,9.81 L3.89,5.71 H5.90 L7.41,9.81 H5.80 L5.40,8.66 H4.39 L3.99,9.81 Z" fill="#D65A26"/>
 <rect x="9.18" y="5.48" width="4.44" height="0.9" fill="#E0561C"/>
 <rect x="9.18" y="7.76" width="4.44" height="0.8" fill="#9AA6BC"/>
 <rect x="9.18" y="9.81" width="4.44" height="0.8" fill="#9AA6BC"/>
</g>
<g id="i-multi">
 <path d="M0.6,15.2 V4.4 Q0.6,3.6 1.4,3.6 H4.3999999999999995 Q5.199999999999999,3.6 5.199999999999999,4.4 V5.6 H10.399999999999999 Q11.2,5.6 11.2,6.3999999999999995 V15.2 H9.399999999999999 V13.999999999999998 Q9.399999999999999,13.399999999999999 8.799999999999999,13.399999999999999 H7.999999999999999 Q7.3999999999999995,13.399999999999999 7.3999999999999995,13.999999999999998 V15.2 H4.4 V13.999999999999998 Q4.4,13.399999999999999 3.8000000000000003,13.399999999999999 H3.0 Q2.4,13.399999999999999 2.4,13.999999999999998 V15.2 Z" fill="#fff" stroke="#3F5B8C" stroke-width="1.1" stroke-linejoin="round"/>
 <rect x="1.2" y="4.2" width="3.3999999999999995" height="1.0" fill="url(#gTab)"/>
 <path d="M1.87,11.17 L2.95,7.71 H4.39 L5.48,11.17 H4.32 L4.03,10.20 H3.31 L3.03,11.17 Z" fill="#D65A26"/>
 <path d="M4.4,11.799999999999999 V1.4 Q4.4,0.6 5.2,0.6 H10.399999999999999 Q11.2,0.6 11.2,1.4 V2.6 H14.6 Q15.4,2.6 15.4,3.4000000000000004 V11.799999999999999 H13.600000000000001 V10.599999999999998 Q13.600000000000001,9.999999999999998 13.000000000000002,9.999999999999998 H12.200000000000001 Q11.600000000000001,9.999999999999998 11.600000000000001,10.599999999999998 V11.799999999999999 H8.0 V10.599999999999998 Q8.0,9.999999999999998 7.4,9.999999999999998 H6.6 Q6.0,9.999999999999998 6.0,10.599999999999998 V11.799999999999999 Z" fill="#fff" stroke="#3F5B8C" stroke-width="1.1" stroke-linejoin="round"/>
 <rect x="5.0" y="1.2" width="5.6" height="1.0" fill="url(#gTab)"/>
 <path d="M5.72,7.94 L6.84,4.62 H8.34 L9.46,7.94 H8.26 L7.96,7.01 H7.22 L6.92,7.94 Z" fill="#D65A26"/>
 <rect x="10.78" y="4.44" width="3.30" height="0.9" fill="#E0561C"/>
 <rect x="10.78" y="6.28" width="3.30" height="0.8" fill="#9AA6BC"/>
 <rect x="10.78" y="7.94" width="3.30" height="0.8" fill="#9AA6BC"/>
</g>
<g id="i-key">
 <path d="M5.8,6.8 L14.3,14.3" stroke="#D4A440" stroke-width="2.7" stroke-linecap="round"/>
 <path d="M5.8,6.8 L14.3,14.3" stroke="#F6D070" stroke-width="1.3" stroke-linecap="round"/>
 <g stroke="#D4A440" stroke-width="0.6"><path d="M9.2,10.6 L10.3,9.5 M10.8,12 L11.9,10.9 M12.4,13.4 L13.5,12.3"/></g>
 <circle cx="4.6" cy="4.4" r="3.3" fill="url(#gKey)" stroke="#D8AC48" stroke-width="0.7"/>
 <circle cx="3.9" cy="3.8" r="1.25" fill="#fff"/>
</g>
<g id="i-table">
 <rect x="0.5" y="0.5" width="15" height="14" fill="#fff" stroke="#7C7C7C"/>
 <rect x="2" y="2" width="12" height="11" fill="#4E9238" rx="0.5"/>
 <rect x="3" y="3" width="10" height="1" fill="#9CC88A"/>
 <g fill="#F4FAEC">
  <rect x="3" y="5" width="2" height="1"/><rect x="6" y="5" width="3" height="1"/><rect x="10" y="5" width="3" height="1"/>
  <rect x="3" y="7" width="2" height="1"/><rect x="6" y="7" width="3" height="1"/><rect x="10" y="7" width="3" height="1"/>
  <rect x="3" y="9" width="2" height="1"/><rect x="6" y="9" width="3" height="1"/><rect x="10" y="9" width="3" height="1"/>
  <rect x="3" y="11" width="2" height="1"/><rect x="6" y="11" width="3" height="1"/><rect x="10" y="11" width="3" height="1"/>
 </g>
</g>
<g id="i-home">
 <rect x="12" y="1.5" width="1.6" height="4" fill="#B01010"/>
 <path d="M2.5,8 L8,3 L13.5,8 V15.5 H2.5 Z" fill="#E8E8E8" stroke="#555" stroke-width="0.8"/>
 <path d="M1,10 L8,3 L15,10" fill="none" stroke="#5A3010" stroke-width="2.6" stroke-linejoin="miter"/>
 <path d="M1,10 L8,3 L15,10" fill="none" stroke="#E0A060" stroke-width="1.4"/>
 <rect x="4" y="10" width="3.5" height="5.5" fill="#B87030"/>
 <rect x="9" y="9.5" width="3" height="3" fill="#8CC4F0" stroke="#444" stroke-width="0.7"/>
 <rect x="2.5" y="15" width="11" height="1" fill="#444"/>
</g>
<g id="i-db">
 <rect x="1.5" y="0.5" width="13" height="15" rx="1.8" fill="#fff" stroke="#4A4A4A" stroke-width="1.1"/>
 <rect x="2.2" y="1.3" width="11.6" height="2.6" fill="url(#gDb)"/>
 <rect x="2.2" y="5.2" width="11.6" height="2.6" fill="url(#gDb)"/>
 <rect x="2.2" y="9.1" width="11.6" height="2.6" fill="url(#gDb)"/>
 <rect x="2.2" y="13" width="11.6" height="2" fill="url(#gDb)"/>
 <rect x="1.5" y="4.2" width="13" height="1" fill="#4A4A4A"/>
 <rect x="1.5" y="8.1" width="13" height="1" fill="#4A4A4A"/>
 <rect x="1.5" y="12" width="13" height="1" fill="#4A4A4A"/>
</g>
<g id="i-mail">
 <rect x="4.5" y="0.6" width="11" height="13.4" fill="#fff" stroke="#3C8AE0" stroke-width="1.1"/>
 <rect x="5.2" y="6" width="9.6" height="7.5" fill="#BFE0FA"/>
 <rect x="6" y="3.3" width="4" height="0.9" fill="#9A9A9A"/>
 <rect x="0.6" y="6.2" width="12" height="8.8" fill="#FFD27A" stroke="#D88A10" stroke-width="1.2"/>
 <path d="M1.2,7 L6.6,11.4 L12,7" fill="none" stroke="#D88A10" stroke-width="1.1"/>
 <path d="M1.6,6.9 L6.6,10.4 L11.6,6.9 Z" fill="#FFF6D8"/>
</g>
<g id="i-queue">
 <path d="M1.5,1 L3,2 L4.5,1 L6,2 L7.5,1 L9,2 L10.5,1 L12,2 L13.5,1 V15 L12,14 L10.5,15 L9,14 L7.5,15 L6,14 L4.5,15 L3,14 L1.5,15 Z" fill="#E8F0FC" stroke="#6A84B0" stroke-width="1"/>
 <rect x="2.2" y="8.3" width="10.6" height="5" fill="#C8D8EE"/>
 <g fill="#5A74A8"><rect x="3.8" y="4.2" width="2.8" height="1"/><rect x="3.8" y="6.2" width="1" height="1"/><rect x="5.5" y="6.2" width="2" height="1"/><rect x="9" y="6.2" width="2" height="1"/>
 <rect x="3.8" y="9.2" width="2.8" height="1"/><rect x="3.8" y="11.2" width="2" height="1"/><rect x="6.5" y="11.2" width="1" height="1"/><rect x="9" y="11.2" width="2" height="1"/></g>
</g>
<g id="i-route">
 <path d="M0.6,0.6 H8.5 L12.4,4.5 V14.4 H0.6 Z" fill="#F4F9FF" stroke="#3A90D8" stroke-width="1.2"/>
 <path d="M8.5,0.6 V4.5 H12.4" fill="#fff" stroke="#3A90D8" stroke-width="1"/>
 <rect x="3" y="3" width="2" height="0.8" fill="#9AAAC0"/><rect x="3" y="7" width="2" height="0.8" fill="#9AAAC0"/><rect x="3" y="10.5" width="2" height="0.8" fill="#9AAAC0"/>
 <path d="M4.6,7.2 L6.8,5 L11.2,9.4 V6.2 H14.6 V15.4 H5.4 V12 H8.6 Z" fill="url(#gGreen)" stroke="#2A6A10" stroke-width="0.9"/>
</g>
<g id="i-batch">
 <path d="M0.6,16.4 V5.3999999999999995 Q0.6,4.6 1.4,4.6 H4.3999999999999995 Q5.199999999999999,4.6 5.199999999999999,5.3999999999999995 V6.6 H10.399999999999999 Q11.2,6.6 11.2,7.3999999999999995 V16.4 H9.399999999999999 V15.199999999999998 Q9.399999999999999,14.599999999999998 8.799999999999999,14.599999999999998 H7.999999999999999 Q7.3999999999999995,14.599999999999998 7.3999999999999995,15.199999999999998 V16.4 H4.4 V15.199999999999998 Q4.4,14.599999999999998 3.8000000000000003,14.599999999999998 H3.0 Q2.4,14.599999999999998 2.4,15.199999999999998 V16.4 Z" fill="#fff" stroke="#3F5B8C" stroke-width="1.1" stroke-linejoin="round"/>
 <rect x="1.2" y="5.199999999999999" width="3.3999999999999995" height="1.0" fill="url(#gTab)"/>
 <path d="M1.87,12.28 L2.95,8.76 H4.39 L5.48,12.28 H4.32 L4.03,11.30 H3.31 L3.03,12.28 Z" fill="#D65A26"/>
 <path d="M4.4,12.799999999999999 V2.4000000000000004 Q4.4,1.6 5.2,1.6 H10.399999999999999 Q11.2,1.6 11.2,2.4000000000000004 V3.6 H14.6 Q15.4,3.6 15.4,4.4 V12.799999999999999 H13.600000000000001 V11.599999999999998 Q13.600000000000001,10.999999999999998 13.000000000000002,10.999999999999998 H12.200000000000001 Q11.600000000000001,10.999999999999998 11.600000000000001,11.599999999999998 V12.799999999999999 H8.0 V11.599999999999998 Q8.0,10.999999999999998 7.4,10.999999999999998 H6.6 Q6.0,10.999999999999998 6.0,11.599999999999998 V12.799999999999999 Z" fill="#fff" stroke="#3F5B8C" stroke-width="1.1" stroke-linejoin="round"/>
 <rect x="5.0" y="2.2" width="5.6" height="1.0" fill="url(#gTab)"/>
 <path d="M5.72,8.94 L6.84,5.62 H8.34 L9.46,8.94 H8.26 L7.96,8.01 H7.22 L6.92,8.94 Z" fill="#D65A26"/>
 <rect x="10.78" y="5.44" width="3.30" height="0.9" fill="#E0561C"/>
 <rect x="10.78" y="7.28" width="3.30" height="0.8" fill="#9AA6BC"/>
 <rect x="10.78" y="8.94" width="3.30" height="0.8" fill="#9AA6BC"/>
</g>
<g id="i-scroll">
 <path d="M2,14.5 V3.5 Q2,1.5 4.5,1.5 H15.2 Q14.8,3.2 13,3.2 V14.5 Z" fill="#EAF2FC" stroke="#5A88BC" stroke-width="1.1"/>
 <path d="M0.6,13.2 H13 V15.3 H1.5 Q0.6,15.3 0.6,14.3 Z" fill="#8AAED8" stroke="#5A88BC" stroke-width="1"/>
 <path d="M3.5,3.3 Q8,4.6 13,3.2" fill="none" stroke="#5A88BC" stroke-width="1"/>
 <g fill="#F0A060"><circle cx="6" cy="6.5" r="0.7"/><circle cx="6" cy="8.5" r="0.7"/><circle cx="6" cy="10.5" r="0.7"/></g>
 <g fill="#90A0B8"><rect x="7.5" y="6.2" width="1.6" height="0.7"/><rect x="10" y="6.2" width="1.8" height="0.7"/><rect x="7.5" y="8.2" width="1" height="0.7"/><rect x="9.2" y="8.2" width="1.5" height="0.7"/><rect x="7.5" y="10.2" width="2.5" height="0.7"/><rect x="10.8" y="10.2" width="0.8" height="0.7"/></g>
</g>
<g id="i-bill">
 <rect x="0.6" y="1.6" width="14.2" height="9.6" fill="#E0F0E0" stroke="#2E8A3E" stroke-width="1.2"/>
 <rect x="2.8" y="3.6" width="9.8" height="5.6" fill="#5AAA6A" stroke="#2A7A3A" stroke-width="0.6"/>
 <g fill="#CDE8CC"><rect x="3.5" y="5" width="1.5" height="2.5"/><rect x="8" y="5" width="3.5" height="2.5"/></g>
 <rect x="10" y="10" width="5.6" height="2.7" fill="#F09010" stroke="#D86A00" stroke-width="0.5"/>
 <rect x="10" y="12.6" width="5.6" height="2.7" fill="#F09010" stroke="#D86A00" stroke-width="0.5"/>
 <rect x="5" y="13.2" width="5.5" height="2.6" fill="#F09010" stroke="#D86A00" stroke-width="0.5"/>
 <g fill="#FFF070"><rect x="11.5" y="10.8" width="2" height="0.9"/><rect x="11.5" y="13.3" width="2" height="0.9"/><rect x="6.3" y="14" width="2" height="0.9"/></g>
</g>
<g id="i-gift">
 <rect x="1.2" y="9.5" width="10.6" height="6" fill="#fff" stroke="#555" stroke-width="1"/>
 <rect x="0.6" y="5.2" width="12.6" height="3.6" fill="#fff" stroke="#555" stroke-width="1"/>
 <path d="M6.5,5 Q2,0.5 2.5,4.6 M6.5,5 Q11,0.5 10.7,4.6" fill="#E85040" stroke="#D83828" stroke-width="1.6"/>
 <rect x="5.4" y="4.4" width="2.4" height="6.5" fill="#E85040"/>
 <rect x="6.6" y="10.6" width="9" height="5" rx="1" fill="#E8F4FF" stroke="#3A3AA0" stroke-width="1"/>
 <path d="M6.5,13.5 L9.5,10.6 M12.8,15.6 L15.6,12.8" stroke="#209030" stroke-width="1.3"/>
 <rect x="10" y="12.8" width="3" height="0.9" fill="#4A5AB0"/>
</g>
<g id="i-app">
 <circle cx="8" cy="7.6" r="7.4" fill="#C03418"/>
 <g stroke="#E88870" stroke-width="0.5" opacity="0.8"><path d="M8,7.6 L2,2.5 M8,7.6 L0.8,6 M8,7.6 L0.8,10 M8,7.6 L5,0.6 M8,7.6 L9,0.4 M8,7.6 L12.5,1.8"/></g>
 <rect x="6" y="5.2" width="6.6" height="2" fill="#8A8A8A" stroke="#5A5A5A" stroke-width="0.5"/>
 <path d="M4.3,8.5 H15.7 V15.6 H4.3 Z" fill="#F47E64" stroke="#B82A14" stroke-width="0.8"/>
 <rect x="4.8" y="9" width="10.4" height="2.2" fill="#F8B4A0"/>
 <rect x="4.3" y="11.6" width="11.4" height="0.8" fill="#C03418"/>
 <ellipse cx="9.8" cy="12" rx="1.8" ry="1.2" fill="#B8B8B8" stroke="#707070" stroke-width="0.5"/>
</g>
<g id="i-sync">
 <circle cx="8.2" cy="8" r="4.6" fill="none" stroke="#1A7AB8" stroke-width="2.8"/>
 <circle cx="8.2" cy="8" r="4.6" fill="none" stroke="#6CC8F4" stroke-width="1.2"/>
 <path d="M0.6,1.8 H2.8 V5.6 L7.6,0.8 L9.4,2.6 L4.6,7.4 H7.8 V9.4 H0.6 Z" fill="#84D4F8" stroke="#1A7AB8" stroke-width="0.9" stroke-linejoin="round"/>
 <path d="M15.4,14.2 H13.2 V10.4 L8.4,15.2 L6.6,13.4 L11.4,8.6 H8.2 V6.6 H15.4 Z" fill="#84D4F8" stroke="#1A7AB8" stroke-width="0.9" stroke-linejoin="round"/>
</g>
</defs></svg>
</body></html>
